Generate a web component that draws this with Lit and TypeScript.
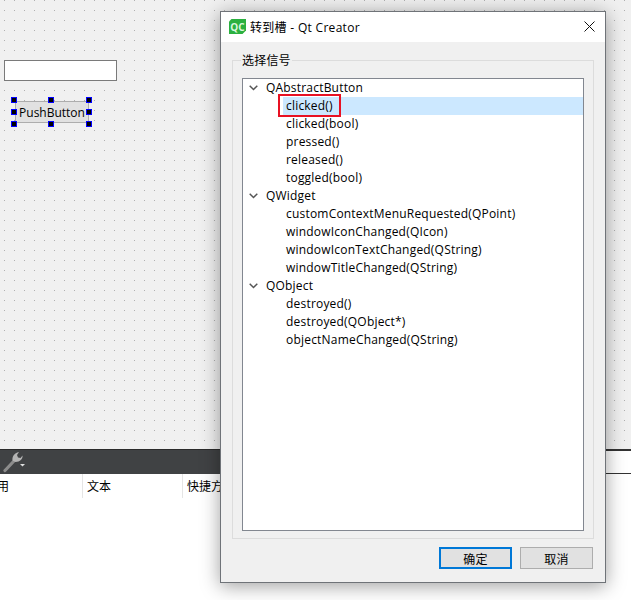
import { LitElement, html, css } from "lit";
import { customElement } from "lit/decorators.js";

const groups: [string, string[]][] = [
  ["QAbstractButton", ["clicked()", "clicked(bool)", "pressed()", "released()", "toggled(bool)"]],
  ["QWidget", ["customContextMenuRequested(QPoint)", "windowIconChanged(QIcon)", "windowIconTextChanged(QString)", "windowTitleChanged(QString)"]],
  ["QObject", ["destroyed()", "destroyed(QObject*)", "objectNameChanged(QString)"]],
];

const handles = ["tl", "tc", "tr", "ml", "mr", "bl", "bc", "br"];

@customElement("app-root")
export class AppRoot extends LitElement {
  static styles = css`
    :host {
      display: block;
      width: 631px;
      height: 600px;
      position: relative;
      overflow: hidden;
      background: #fff;
      font-family: "Open Sans", "Noto Sans CJK SC", sans-serif;
      font-size: 12px;
      color: #000;
    }
    .page { display: flex; flex-direction: column; height: 600px; }
    .canvas {
      height: 449px;
      position: relative;
      background-color: #f0f0f0;
      background-image: conic-gradient(at 1px 1px, transparent 75%, #b0b0b0 75%);
      background-size: 10px 10px;
      background-position: 4px 0;
    }
    .line-edit {
      position: absolute;
      left: 4px; top: 60px;
      width: 113px; height: 21px;
      box-sizing: border-box;
      background: #fff;
      border: 1px solid #7a7a7a;
    }
    .push {
      position: absolute;
      left: 15px; top: 101px;
      width: 74px; height: 22px;
      box-sizing: border-box;
      background: #e1e1e1;
      border: 1px solid #adadad;
      display: flex; align-items: center; justify-content: center;
      white-space: nowrap;
    }
    .h {
      position: absolute;
      width: 4px; height: 4px;
      background: #000;
      border: 1px solid #0000ff;
    }
    .tl { left: 11px; top: 97px; } .tc { left: 48px; top: 97px; } .tr { left: 86px; top: 97px; }
    .ml { left: 11px; top: 109px; } .mr { left: 86px; top: 109px; }
    .bl { left: 11px; top: 121px; } .bc { left: 48px; top: 121px; } .br { left: 86px; top: 121px; }
    .bar { height: 25px; display: flex; flex: none; }
    .toolbar {
      flex: 1;
      background: #404244;
      border-top: 1px solid #2b2b2b;
      box-sizing: border-box;
      display: flex; align-items: center;
      padding-left: 3px;
    }
    .bar-rest {
      width: 60px;
      box-sizing: border-box;
      background: #fff;
      border-top: 2px solid #333;
      border-bottom: 1px solid #333;
    }
    .header { height: 24px; display: flex; background: #fff; }
    .col { box-sizing: border-box; border-right: 1px solid #e5e5e5; padding-left: 4px; display: flex; align-items: center; white-space: nowrap; overflow: hidden; }
    .col.a { width: 83px; padding-left: 0; }
    .col.a span { margin-left: -3px; }
    .col.b { width: 100px; }
    .col.c { flex: 1; border: 0; }
    .dialog {
      position: absolute;
      left: 220px; top: 11px;
      width: 386px; height: 572px;
      box-sizing: border-box;
      background: #f0f0f0;
      border: 1px solid #6f7378;
      box-shadow: 0 3px 18px rgba(0, 0, 0, 0.38);
      display: flex; flex-direction: column;
      letter-spacing: 0.2px;
    }
    .title {
      height: 30px;
      background: #fff;
      display: flex; align-items: center;
      padding: 0 10px 0 8px;
      gap: 4px;
      flex: none;
    }
    .title .t { flex: 1; letter-spacing: 0.3px; }
    .title .logo { margin-bottom: 1px; }
    .title .close { margin-bottom: 2px; }
    .body { flex: 1; padding: 18px 11px 0 11px; display: flex; flex-direction: column; }
    .group {
      position: relative;
      height: 479px;
      box-sizing: border-box;
      border: 1px solid #dcdcdc;
      padding: 17px 9px 7px 9px;
      display: flex;
    }
    .legend {
      position: absolute;
      left: 8px; top: -8px;
      background: #f0f0f0;
      padding: 0 1px;
      line-height: 16px;
    }
    .tree {
      flex: 1;
      box-sizing: border-box;
      background: #fff;
      border: 1px solid #828790;
      overflow: hidden;
    }
    .row { height: 18px; display: flex; align-items: center; white-space: nowrap; box-sizing: border-box; }
    .row span { padding-bottom: 2px; }
    .row.top { padding-left: 6px; gap: 8px; }
    .row.child { margin-left: 40px; padding-left: 3px; position: relative; }
    .row.sel { background: #cce8ff; }
    .mark {
      position: absolute;
      left: -5px; top: -3px;
      width: 63px; height: 23px;
      box-sizing: border-box;
      border: 2px solid #e81123;
      pointer-events: none;
    }
    .actions { flex: 1; display: flex; justify-content: flex-end; align-items: flex-start; gap: 8px; padding: 8px 1px 0 0; }
    .btn {
      width: 73px; height: 22px;
      box-sizing: border-box;
      background: #e1e1e1;
      border: 1px solid #adadad;
      display: flex; align-items: center; justify-content: center;
      padding-top: 1px;
    }
    .btn.ok { border: 2px solid #0078d7; }
    svg { display: block; flex: none; }
  `;

  private logo() {
    return html`<svg class="logo" width="17" height="15" viewBox="0 0 17 15">
      <path d="M2.5 0H17V11.5L13.5 15H0V2.5Z" fill="#2bb03f"/>
      <text x="8.5" y="11.5" text-anchor="middle" font-family="Open Sans" font-weight="700" font-size="10" fill="#d9f7dc">QC</text>
    </svg>`;
  }

  private chev() {
    return html`<svg width="9" height="6" viewBox="0 0 9 6"><path d="M0.7 0.7L4.5 4.5L8.3 0.7" fill="none" stroke="#555" stroke-width="1.5"/></svg>`;
  }

  render() {
    let first = true;
    return html`
      <div class="page">
        <div class="canvas">
          <div class="line-edit"></div>
          <div class="push">PushButton</div>
          ${handles.map((h) => html`<div class="h ${h}"></div>`)}
        </div>
        <div class="bar">
          <div class="toolbar">
            <svg width="24" height="22" viewBox="0 0 24 22">
              <path d="M2 19.5L10.5 10.5" stroke="#8c8c8c" stroke-width="3.2" stroke-linecap="round" fill="none"/>
              <path d="M9.5 9.5C9 6 11 2 16 1L14 4L15 6.5L17.5 7L19.5 4.5C20 8 17 11 12.5 11Z" fill="#b4b4b4"/>
              <path d="M17 13H22L19.5 15.5Z" fill="#e0e0e0"/>
            </svg>
          </div>
          <div class="bar-rest"></div>
        </div>
        <div class="header">
          <div class="col a"><span>用</span></div>
          <div class="col b">文本</div>
          <div class="col c">快捷方式</div>
        </div>
      </div>
      <div class="dialog">
        <div class="title">
          ${this.logo()}
          <span class="t">转到槽 - Qt Creator</span>
          <svg class="close" width="11" height="11" viewBox="0 0 11 11"><path d="M0.5 0.5L10.5 10.5M10.5 0.5L0.5 10.5" stroke="#111" stroke-width="1" fill="none"/></svg>
        </div>
        <div class="body">
          <div class="group">
            <span class="legend">选择信号</span>
            <div class="tree">
              ${groups.map(([name, kids]) => html`
                <div class="row top">${this.chev()}<span>${name}</span></div>
                ${kids.map((k) => {
                  const sel = first;
                  first = false;
                  return html`<div class="row child ${sel ? "sel" : ""}"><span>${k}</span>${sel ? html`<div class="mark"></div>` : ""}</div>`;
                })}
              `)}
            </div>
          </div>
          <div class="actions">
            <div class="btn ok">确定</div>
            <div class="btn">取消</div>
          </div>
        </div>
      </div>
    `;
  }
}
